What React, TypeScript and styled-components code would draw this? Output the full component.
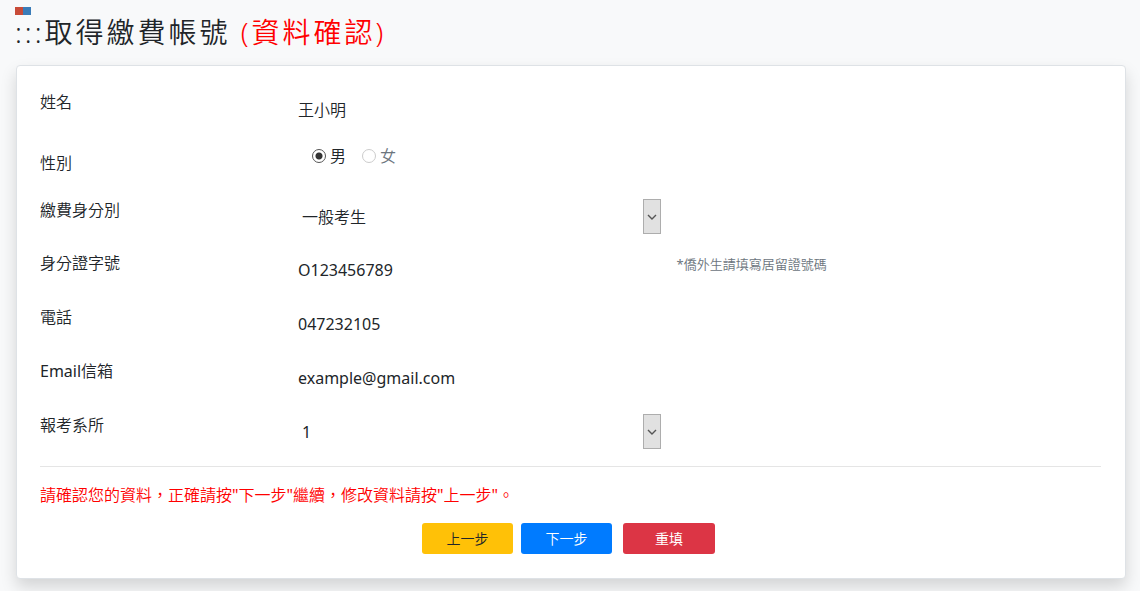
import React from "react";
import styled, { createGlobalStyle } from "styled-components";

const GlobalStyle = createGlobalStyle`
  *, *::before, *::after { box-sizing: border-box; }
  body {
    margin: 0;
    background: #f8f9fa;
    color: #212529;
    font-family: "Noto Sans", "Noto Sans CJK TC DemiLight", "Noto Sans CJK TC", sans-serif;
    font-size: 16px;
    font-weight: 400;
    line-height: 24px;
  }
  input, select, button { font: inherit; color: inherit; }
`;

const Page = styled.main`
  padding: 7px 14px 12px 15px;
`;

const Flag = styled.svg`
  display: block;
  width: 16px;
  height: 8px;
`;

const Title = styled.h1`
  margin: 0 0 16px;
  font-size: 28px;
  font-weight: 350;
  line-height: 34px;
  letter-spacing: 3px;
`;

const Emphasis = styled.span`
  color: #ff0000;
`;

const Card = styled.form`
  margin-left: 1px;
  padding: 24px 24px 24px 23px;
  background: #fff;
  border: 1px solid #dee2e6;
  border-radius: 4px;
  box-shadow: 0 8px 16px rgba(0, 0, 0, 0.15);
`;

const Row = styled.div`
  display: grid;
  grid-template-columns: 23fr 37fr 40fr;
  margin-bottom: 16px;
`;

const Label = styled.label``;

const RadioLegend = styled.span`
  padding: 7px 0;
`;

const Control = styled.div`
  padding-right: 16px;
`;

const TextInput = styled.input`
  display: block;
  width: 100%;
  height: 38px;
  padding: 6px 13px;
  border: 1px solid transparent;
  border-radius: 4px;
  background: transparent;
`;

const SelectBox = styled.div`
  position: relative;
`;

const Select = styled.select`
  appearance: none;
  display: block;
  width: 100%;
  height: 37px;
  padding: 6px 30px 6px 17px;
  border: 1px solid transparent;
  border-radius: 0;
  background: transparent;
`;

const SelectArrow = styled.span`
  position: absolute;
  top: 1px;
  right: 0;
  bottom: 1px;
  width: 18px;
  display: flex;
  align-items: center;
  justify-content: center;
  background: #e1e1e1;
  border: 1px solid #adadad;
  pointer-events: none;
`;

const RadioGroup = styled.div`
  display: flex;
  gap: 16px;
  padding-left: 28px;
`;

const RadioLabel = styled.label<{ $muted?: boolean }>`
  display: flex;
  align-items: center;
  gap: 4px;
  height: 24px;
  color: ${(p) => (p.$muted ? "#6c757d" : "inherit")};
`;

const Radio = styled.input`
  appearance: none;
  width: 14px;
  height: 14px;
  margin: 0;
  border: 1px solid #cccccc;
  border-radius: 50%;
  background: #fff;

  &:checked {
    border-color: #555;
    background: radial-gradient(circle, #333 0 3px, #fff 4px);
  }
`;

const Note = styled.small`
  font-size: 13px;
  line-height: 26px;
  color: #6c757d;
`;

const Divider = styled.hr`
  margin: 0 0 16px;
  border: 0;
  border-top: 1px solid #e5e5e5;
`;

const Notice = styled.p`
  margin: 0 0 16px;
  color: #ff0000;
`;

const Actions = styled.div`
  display: flex;
  justify-content: center;
  gap: 8px;
  padding-right: 4px;
`;

const tones = {
  warning: { fill: "#ffc107", text: "#212529" },
  primary: { fill: "#007bff", text: "#ffffff" },
  danger: { fill: "#dc3545", text: "#ffffff" },
};

const Button = styled.button<{ $tone: keyof typeof tones }>`
  width: 91px;
  height: 31px;
  padding: 4px 8px;
  border: 0;
  border-radius: 3px;
  background: ${(p) => tones[p.$tone].fill};
  color: ${(p) => tones[p.$tone].text};
  font-size: 14px;
  line-height: 21px;
  cursor: pointer;
`;

const ResetButton = styled(Button)`
  width: 92px;
  margin-left: 3px;
  font-family: "Noto Sans CJK TC", sans-serif;
`;

function TextRow({ id, label, value, note }: { id: string; label: string; value: string; note?: string }) {
  return (
    <Row>
      <Label htmlFor={id}>{label}</Label>
      <Control>
        <TextInput id={id} value={value} readOnly />
      </Control>
      {note && <Note>{note}</Note>}
    </Row>
  );
}

function SelectRow({ id, label, value }: { id: string; label: string; value: string }) {
  return (
    <Row>
      <Label htmlFor={id}>{label}</Label>
      <Control>
        <SelectBox>
          <Select id={id} defaultValue={value}>
            <option value={value}>{value}</option>
          </Select>
          <SelectArrow>
            <svg width="10" height="6" viewBox="0 0 10 6" fill="none" stroke="#555" strokeWidth="1.4">
              <path d="M1 1l4 4 4-4" />
            </svg>
          </SelectArrow>
        </SelectBox>
      </Control>
    </Row>
  );
}

export default function App() {
  return (
    <>
      <GlobalStyle />
      <Page lang="zh-Hant">
        <Flag viewBox="0 0 16 8" aria-hidden="true">
          <rect width="8" height="8" fill="#c84b38" />
          <rect x="8" width="8" height="8" fill="#3a7cb8" />
        </Flag>
        <Title>
          :::取得繳費帳號 <Emphasis>(資料確認)</Emphasis>
        </Title>
        <Card onSubmit={(e) => e.preventDefault()}>
          <TextRow id="name" label="姓名" value="王小明" />
          <Row role="radiogroup" aria-labelledby="gender">
            <RadioLegend id="gender">性別</RadioLegend>
            <RadioGroup>
              <RadioLabel>
                <Radio type="radio" name="gender" value="男" defaultChecked />男
              </RadioLabel>
              <RadioLabel $muted>
                <Radio type="radio" name="gender" value="女" disabled />女
              </RadioLabel>
            </RadioGroup>
          </Row>
          <SelectRow id="identity" label="繳費身分別" value="一般考生" />
          <TextRow id="idno" label="身分證字號" value="O123456789" note="*僑外生請填寫居留證號碼" />
          <TextRow id="phone" label="電話" value="047232105" />
          <TextRow id="email" label="Email信箱" value="example@gmail.com" />
          <SelectRow id="dept" label="報考系所" value="1" />
          <Divider />
          <Notice>請確認您的資料，正確請按"下一步"繼續，修改資料請按"上一步"。</Notice>
          <Actions>
            <Button type="button" $tone="warning">上一步</Button>
            <Button type="submit" $tone="primary">下一步</Button>
            <ResetButton type="reset" $tone="danger">重填</ResetButton>
          </Actions>
        </Card>
      </Page>
    </>
  );
}
